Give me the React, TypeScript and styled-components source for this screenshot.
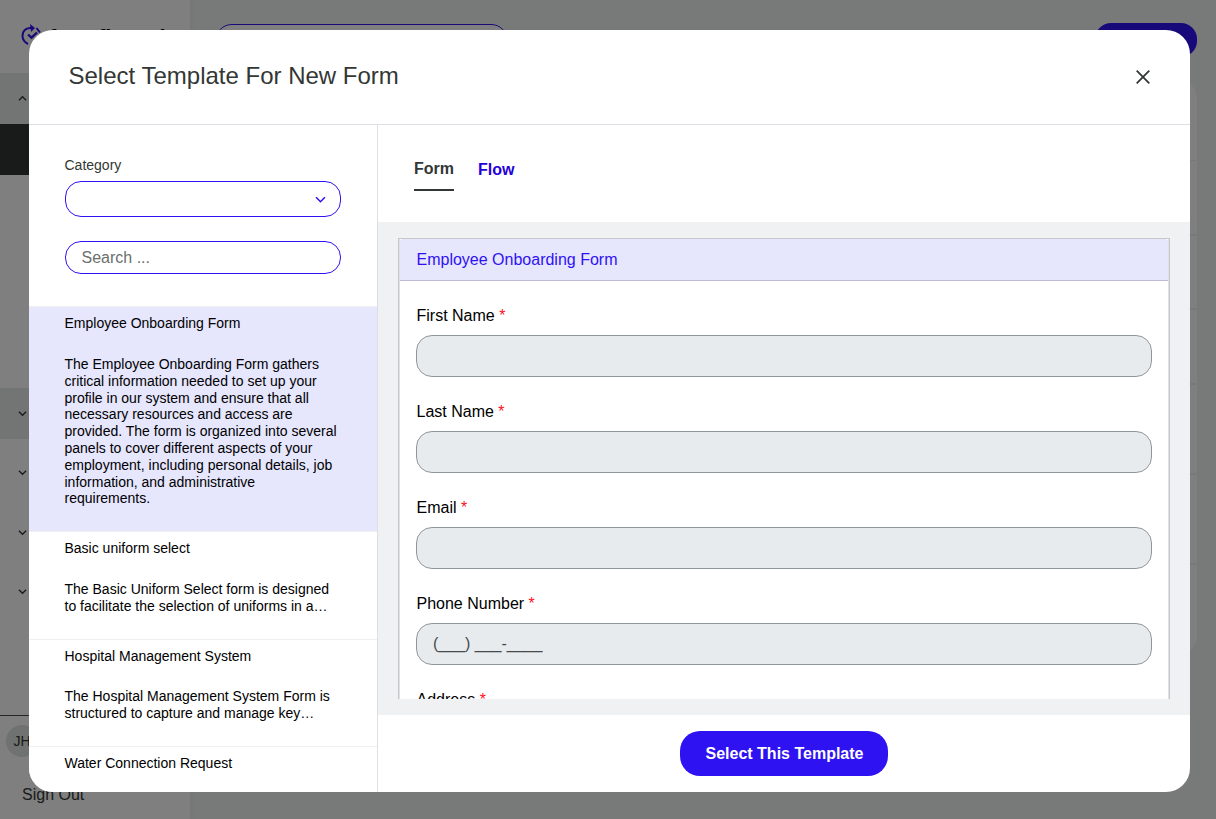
import React from "react";
import styled, { createGlobalStyle } from "styled-components";

const Global = createGlobalStyle`
  *, *::before, *::after { box-sizing: border-box; }
  body { margin: 0; font-family: "Liberation Sans", Arial, sans-serif; font-size: 16px; line-height: 1.2; color: #000; overflow: hidden; }
  p, h1, h2 { margin: 0; font-weight: 400; }
`;

const Page = styled.div`
  position: relative;
  display: flex;
  width: 1216px;
  height: 819px;
  overflow: hidden;
  background: #f0f4f2;
`;
const Sidebar = styled.aside`
  display: flex;
  flex-direction: column;
  width: 190px;
  background: #fff;
  box-shadow: 0 0 6px rgba(0, 0, 0, 0.06);
`;
const Brand = styled.div`
  display: flex;
  align-items: flex-start;
  gap: 6px;
  height: 73px;
  padding: 23px 0 0 21px;
  font-size: 22px;
  line-height: 29px;
  font-weight: 700;
`;
const NavGroup = styled.div<{ $h: number; $bg?: string }>`
  display: flex;
  flex: none;
  align-items: center;
  height: ${(p) => p.$h}px;
  padding-left: 18px;
  background: ${(p) => p.$bg ?? "transparent"};
`;
const UserArea = styled.div`
  margin-top: auto;
  height: 104px;
  border-top: 1px solid #4a4d4b;
  padding: 9px 6px 0;
`;
const Avatar = styled.div`
  display: grid;
  place-items: center;
  width: 32px;
  height: 32px;
  border-radius: 50%;
  background: #dfe4e1;
  color: #333735;
  font-size: 14px;
`;
const SignOut = styled.div`
  padding: 28px 0 0 16px;
  color: #333735;
  line-height: 20px;
`;
const Main = styled.main`
  display: flex;
  flex-direction: column;
  flex: 1;
  padding: 23px 19px 0 25px;
`;
const TopBar = styled.div`
  display: flex;
  justify-content: space-between;
  height: 56px;
`;
const TopSearch = styled.div`
  width: 293px;
  height: 35px;
  margin-top: 1px;
  border: 1px solid #2f12f1;
  border-radius: 17px;
  background: #fff;
`;
const TopButton = styled.div`
  width: 102px;
  height: 34px;
  border-radius: 16px;
  background: #2e12f2;
`;
const TableCard = styled.div`
  height: 576px;
  border-radius: 20px;
  background: #fff;
  overflow: hidden;
`;
const TableRow = styled.div<{ $h: number; $line: number }>`
  height: ${(p) => p.$h}px;
  border-bottom: ${(p) => p.$line}px solid #f0f2f1;
`;
const Overlay = styled.div`
  position: absolute;
  inset: 0;
  padding: 30px 26px 27px 29px;
  background: rgba(0, 0, 0, 0.5);
`;
const Dialog = styled.section`
  display: flex;
  flex-direction: column;
  height: 762px;
  border-radius: 24px;
  background: #fff;
  overflow: hidden;
`;
const DialogHeader = styled.header`
  display: flex;
  flex: none;
  align-items: center;
  justify-content: space-between;
  height: 95px;
  padding: 0 39px 2px 39.5px;
  border-bottom: 1px solid #dcdfe3;
  color: #333735;
`;
const Title = styled.h1`
  font-size: 24px;
  line-height: 30px;
`;
const CloseButton = styled.button`
  display: grid;
  place-items: center;
  width: 16px;
  height: 16px;
  margin-top: 2px;
  padding: 0;
  border: 0;
  background: none;
`;
const Columns = styled.div`
  display: flex;
  flex: 1;
  min-height: 0;
`;
const Picker = styled.div`
  flex: none;
  width: 349px;
  border-right: 1px solid #dcdfe3;
  overflow: hidden;
`;
const Filters = styled.div`
  height: 181px;
  padding: 31px 36px 0;
`;
const FilterLabel = styled.div`
  height: 25px;
  margin-left: -0.5px;
  color: #333735;
  font-size: 14px;
  line-height: 18px;
`;
const SelectBox = styled.div`
  display: flex;
  align-items: center;
  justify-content: flex-end;
  height: 36px;
  padding-right: 14.5px;
  border: 1px solid #2f12f1;
  border-radius: 16px;
`;
const SearchInput = styled.input`
  display: block;
  width: 100%;
  height: 33px;
  margin-top: 24px;
  padding: 0 15.5px;
  border: 1px solid #2f12f1;
  border-radius: 16px;
  font: 16px "Liberation Sans", Arial, sans-serif;
  outline: 0;
  &::placeholder { color: #6b6f6d; opacity: 1; }
`;
const Template = styled.article<{ $h: number; $active?: boolean }>`
  height: ${(p) => p.$h}px;
  padding: 8px 35.5px 0;
  border-top: 1px solid #eef0f1;
  background: ${(p) => (p.$active ? "#e6e6fd" : "#fff")};
  font-size: 14px;
`;
const TemplateName = styled.h2`
  font-size: 14px;
  line-height: 17px;
`;
const TemplateText = styled.p<{ $gap: number }>`
  margin-top: ${(p) => p.$gap}px;
  line-height: 16.8px;
  white-space: pre-line;
`;
const Preview = styled.div`
  display: flex;
  flex: 1;
  flex-direction: column;
  min-width: 0;
`;
const Tabs = styled.nav`
  display: flex;
  flex: none;
  align-items: flex-start;
  gap: 24px;
  height: 97px;
  padding: 33px 36px 0;
`;
const Tab = styled.a<{ $active?: boolean }>`
  height: 33px;
  padding-top: ${(p) => (p.$active ? 1 : 2)}px;
  border-bottom: 2px solid ${(p) => (p.$active ? "#333735" : "transparent")};
  color: ${(p) => (p.$active ? "#333735" : "#2500d9")};
  font-weight: 700;
  line-height: 20px;
`;
const Canvas = styled.div`
  flex: none;
  height: 493px;
  padding: 16px 20px;
  background: #f0f1f3;
`;
const Viewport = styled.div`
  height: 461px;
  overflow: hidden;
`;
const FormCard = styled.div`
  height: 900px;
  border: 1px solid #c5c9cc;
  background: #fff;
  box-shadow: inset 1px 0 #dfe2e4, inset -1px 0 #dfe2e4;
`;
const FormHead = styled.div`
  height: 42px;
  margin: 0 1px;
  padding: 11px 16.5px 0;
  border-bottom: 1px solid #bcbcd6;
  border-radius: 3px 3px 0 0;
  background: #e6e6fd;
  color: #2f12f1;
  line-height: 20px;
`;
const FormBody = styled.div`
  padding: 25px 17px 0;
`;
const Field = styled.div`
  height: 96px;
`;
const FieldLabel = styled.div`
  height: 29px;
  padding-left: 0.5px;
  line-height: 20px;
`;
const Required = styled.span`
  color: #ff0f1f;
`;
const FieldBox = styled.div`
  height: 42px;
  padding: 10px 16px;
  border: 1px solid #8f979b;
  border-radius: 16px;
  background: #e7ebee;
  color: #444a4d;
  line-height: 20px;
`;
const Footer = styled.footer`
  display: flex;
  flex: 1;
  align-items: center;
  justify-content: center;
`;
const PrimaryButton = styled.button`
  width: 208px;
  height: 45px;
  padding: 0 0 0 1px;
  border: 0;
  border-radius: 20px;
  background: #2e12f2;
  color: #fff;
  font: 700 16px "Liberation Sans", Arial, sans-serif;
`;

const Chevron = ({ up, color = "#333", size = 9 }: { up?: boolean; color?: string; size?: number }) => (
  <svg width={size} height={size} viewBox="0 0 10 10" fill="none" stroke={color} strokeWidth="1.4">
    <path d={up ? "M1 7 5 3 9 7" : "M1 3 5 7 9 3"} />
  </svg>
);

const Logo = () => (
  <svg width="22" height="24" viewBox="0 0 22 24" fill="none" stroke="#2e12f2" strokeWidth="2">
    <path d="M7 21C-1 17 0 6 9 5h2M15.500 5l3.500 4.500M20 12c.5 5-2 8-6 10" />
    <path d="M9 1l5 4-4 4z" fill="#2e12f2" stroke="none" />
    <path d="M7 11.500l3.500 3.200 5.500-5.200" strokeWidth="2.3" />
  </svg>
);

const templates = [
  {
    name: "Employee Onboarding Form",
    height: 225,
    gap: 24,
    text: "The Employee Onboarding Form gathers\ncritical information needed to set up your\nprofile in our system and ensure that all\nnecessary resources and access are\nprovided. The form is organized into several\npanels to cover different aspects of your\nemployment, including personal details, job\ninformation, and administrative\nrequirements.",
  },
  { name: "Basic uniform select", height: 108, gap: 24, text: "The Basic Uniform Select form is designed\nto facilitate the selection of uniforms in a…" },
  { name: "Hospital Management System", height: 107, gap: 23, text: "The Hospital Management System Form is\nstructured to capture and manage key…" },
  { name: "Water Connection Request", height: 107, gap: 24, text: "" },
];

const fields = [
  { label: "First Name" },
  { label: "Last Name" },
  { label: "Email" },
  { label: "Phone Number", value: "(___) ___-____" },
  { label: "Address" },
];

export default function App() {
  return (
    <Page>
      <Global />
      <Sidebar>
        <Brand><Logo />formflow.ai</Brand>
        <NavGroup $h={51} $bg="#e6eae8"><Chevron up /></NavGroup>
        <NavGroup $h={51} $bg="#333735" />
        <NavGroup $h={213} />
        <NavGroup $h={51} $bg="#e6eae8"><Chevron /></NavGroup>
        <NavGroup $h={66}><Chevron /></NavGroup>
        <NavGroup $h={54}><Chevron /></NavGroup>
        <NavGroup $h={65}><Chevron /></NavGroup>
        <UserArea>
          <Avatar>JH</Avatar>
          <SignOut>Sign Out</SignOut>
        </UserArea>
      </Sidebar>
      <Main>
        <TopBar><TopSearch /><TopButton /></TopBar>
        <TableCard>
          {[82, 75, 74, 75, 90, 90].map((h, i) => <TableRow key={i} $h={h} $line={i === 0 ? 1 : 2} />)}
        </TableCard>
      </Main>
      <Overlay>
        <Dialog>
          <DialogHeader>
            <Title>Select Template For New Form</Title>
            <CloseButton aria-label="Close">
              <svg width="14" height="14" viewBox="0 0 14 14" stroke="#333735" strokeWidth="1.8">
                <path d="M.7.7 13.3 13.3M13.3.7.7 13.3" />
              </svg>
            </CloseButton>
          </DialogHeader>
          <Columns>
            <Picker>
              <Filters>
                <FilterLabel>Category</FilterLabel>
                <SelectBox><Chevron color="#2f12f1" size={11} /></SelectBox>
                <SearchInput placeholder="Search ..." />
              </Filters>
              {templates.map((t, i) => (
                <Template key={t.name} $h={t.height} $active={i === 0}>
                  <TemplateName>{t.name}</TemplateName>
                  <TemplateText $gap={t.gap}>{t.text}</TemplateText>
                </Template>
              ))}
            </Picker>
            <Preview>
              <Tabs><Tab $active>Form</Tab><Tab>Flow</Tab></Tabs>
              <Canvas>
                <Viewport>
                  <FormCard>
                    <FormHead>Employee Onboarding Form</FormHead>
                    <FormBody>
                      {fields.map((f) => (
                        <Field key={f.label}>
                          <FieldLabel>{f.label} <Required>*</Required></FieldLabel>
                          <FieldBox>{f.value}</FieldBox>
                        </Field>
                      ))}
                    </FormBody>
                  </FormCard>
                </Viewport>
              </Canvas>
              <Footer><PrimaryButton>Select This Template</PrimaryButton></Footer>
            </Preview>
          </Columns>
        </Dialog>
      </Overlay>
    </Page>
  );
}
